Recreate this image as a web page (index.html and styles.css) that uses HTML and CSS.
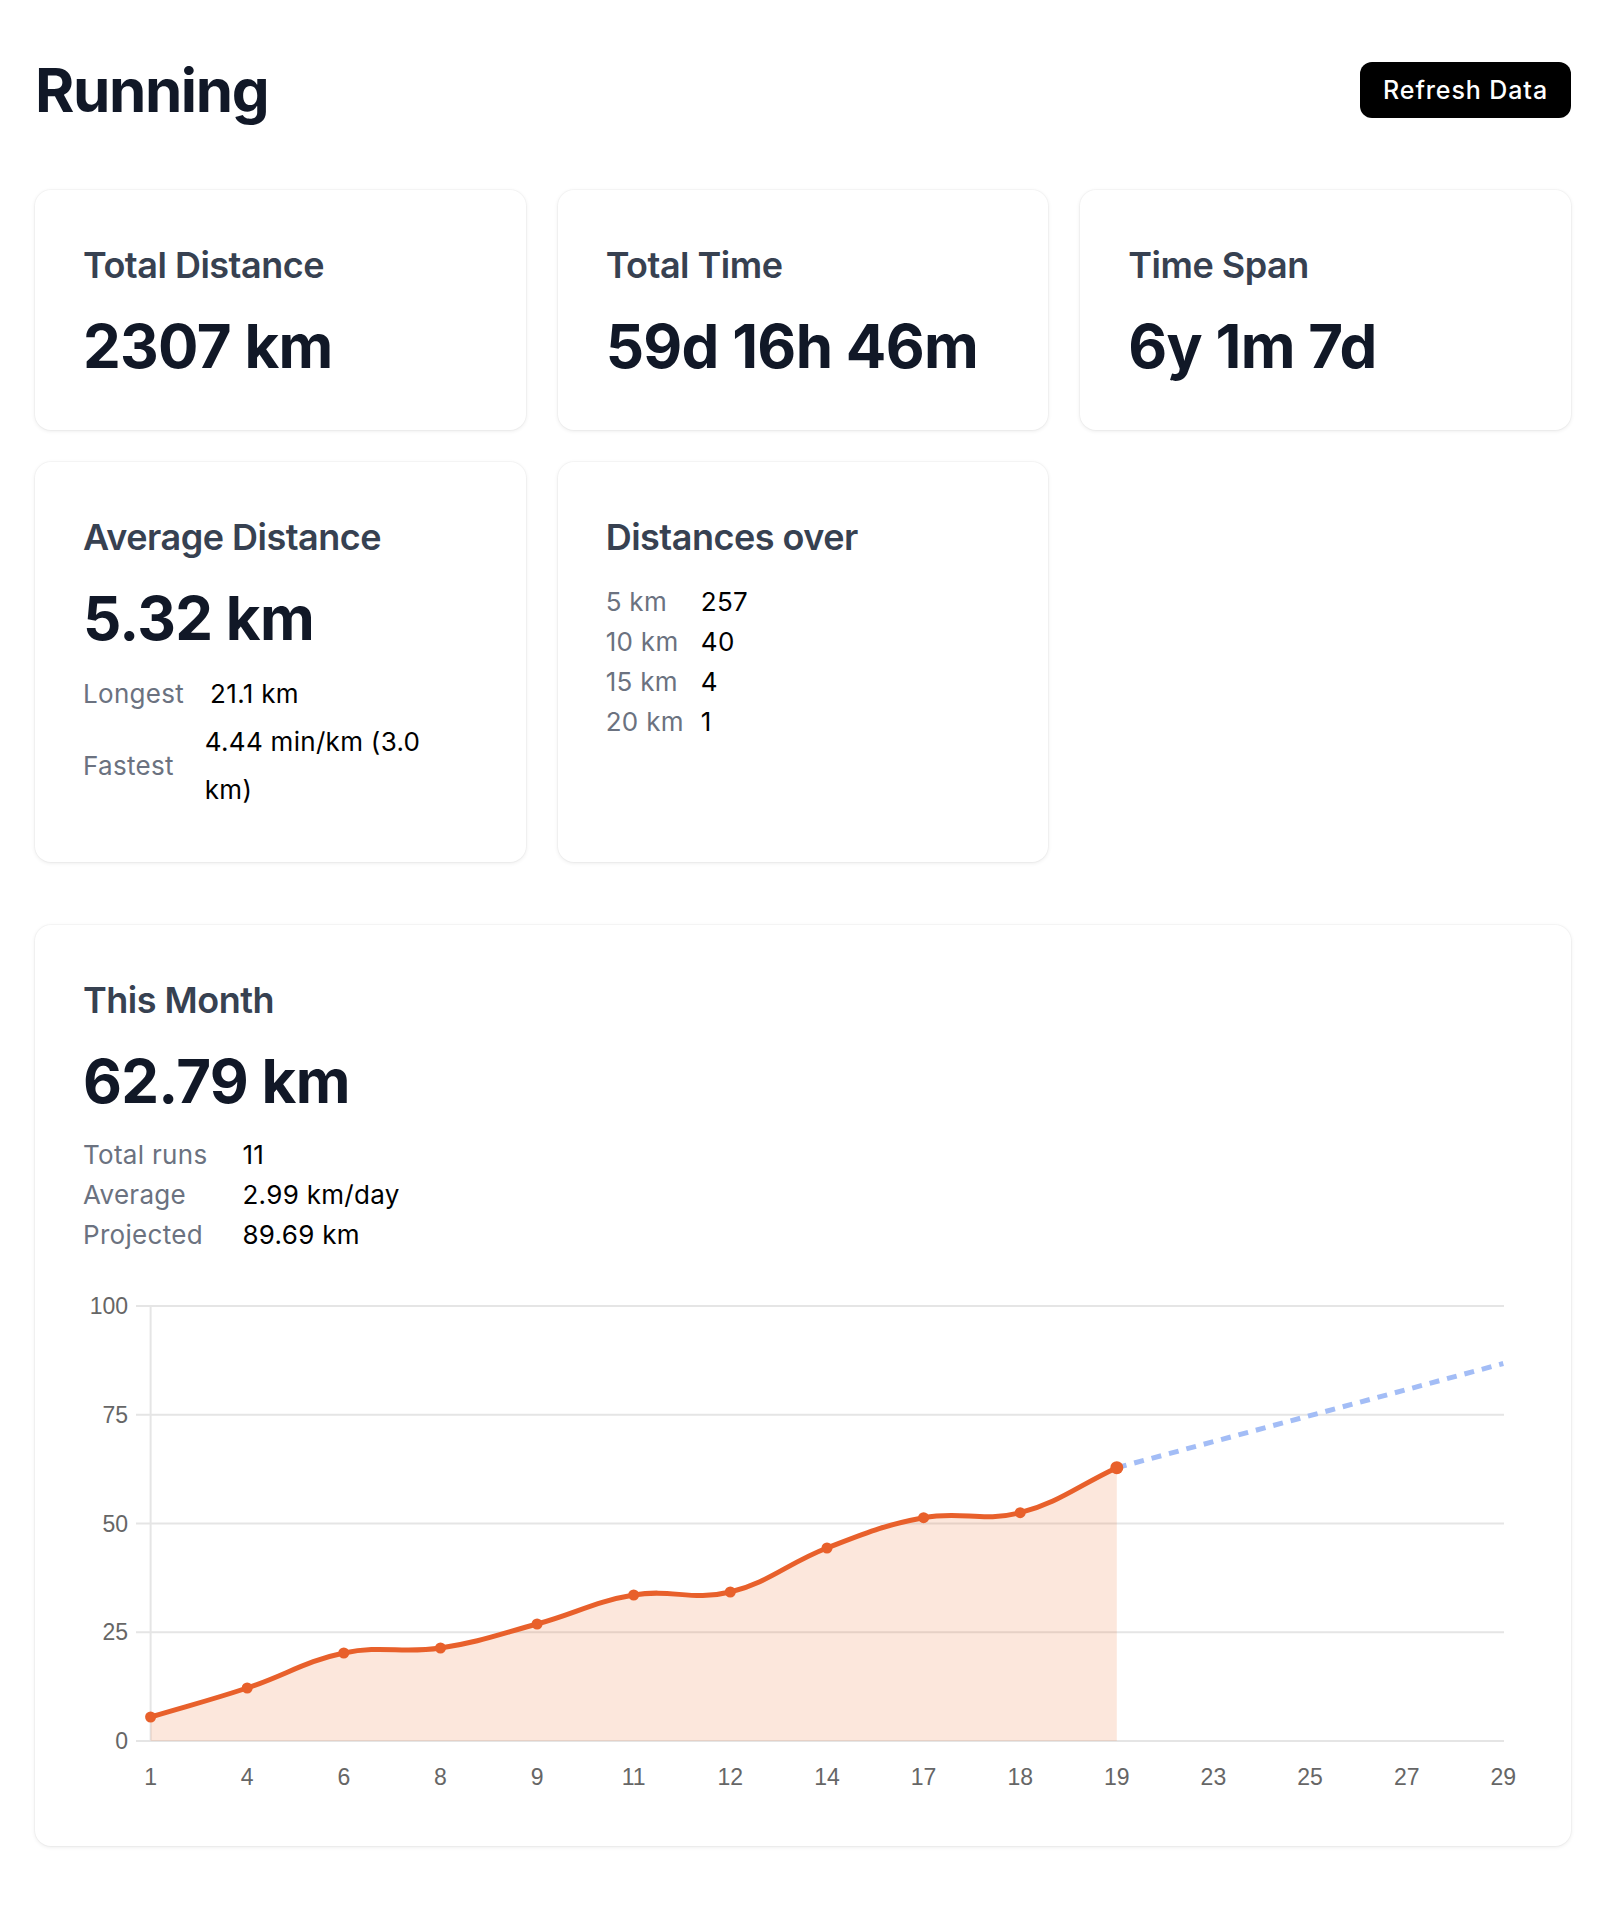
FILE: index.html
```html
<!DOCTYPE html>
<html lang="en">
<head>
<meta charset="utf-8">
<title>Running</title>
<link rel="stylesheet" href="styles.css">
</head>
<body>
<div class="page">
  <header class="header">
    <h1 class="title">Running</h1>
    <button class="refresh">Refresh Data</button>
  </header>

  <section class="grid">
    <div class="card">
      <h2 class="card-title">Total Distance</h2>
      <div class="card-value">2307 km</div>
    </div>
    <div class="card">
      <h2 class="card-title">Total Time</h2>
      <div class="card-value">59d 16h 46m</div>
    </div>
    <div class="card">
      <h2 class="card-title">Time Span</h2>
      <div class="card-value">6y 1m 7d</div>
    </div>
    <div class="card">
      <h2 class="card-title">Average Distance</h2>
      <div class="card-value">5.32 km</div>
      <div class="records">
        <div class="rec-row">
          <span class="label">Longest</span>
          <span class="val gap-a">21.1 km</span>
        </div>
        <div class="rec-row">
          <span class="label">Fastest</span>
          <span class="val gap-b wrap">4.44 min/km (3.0 km)</span>
        </div>
      </div>
    </div>
    <div class="card">
      <h2 class="card-title">Distances over</h2>
      <table class="dist-table">
        <tr><td class="label">5 km</td><td class="val">257</td></tr>
        <tr><td class="label">10 km</td><td class="val">40</td></tr>
        <tr><td class="label">15 km</td><td class="val">4</td></tr>
        <tr><td class="label">20 km</td><td class="val">1</td></tr>
      </table>
    </div>
  </section>

  <section class="card month">
    <h2 class="card-title">This Month</h2>
    <div class="card-value">62.79 km</div>
    <table class="month-table">
      <tr><td class="label">Total runs</td><td class="val">11</td></tr>
      <tr><td class="label">Average</td><td class="val">2.99 km/day</td></tr>
      <tr><td class="label">Projected</td><td class="val">89.69 km</td></tr>
    </table>
    <svg class="chart" width="1440" height="527" viewBox="0 0 1440 527">
      <g transform="translate(-83 -1271)">
        <g class="grid-lines">
          <line x1="136" y1="1306" x2="1504" y2="1306"/>
          <line x1="136" y1="1414.75" x2="1504" y2="1414.75"/>
          <line x1="136" y1="1523.5" x2="1504" y2="1523.5"/>
          <line x1="136" y1="1632.25" x2="1504" y2="1632.25"/>
          <line x1="136" y1="1741" x2="1504" y2="1741"/>
          <line x1="150.6" y1="1306" x2="150.6" y2="1741"/>
        </g>
        <g class="y-labels">
          <text x="128" y="1314">100</text>
          <text x="128" y="1423">75</text>
          <text x="128" y="1531.5">50</text>
          <text x="128" y="1640">25</text>
          <text x="128" y="1749">0</text>
        </g>
        <g class="x-labels">
          <text x="150.6" y="1785">1</text>
          <text x="247.2" y="1785">4</text>
          <text x="343.8" y="1785">6</text>
          <text x="440.5" y="1785">8</text>
          <text x="537.1" y="1785">9</text>
          <text x="633.7" y="1785">11</text>
          <text x="730.3" y="1785">12</text>
          <text x="827" y="1785">14</text>
          <text x="923.6" y="1785">17</text>
          <text x="1020.2" y="1785">18</text>
          <text x="1116.8" y="1785">19</text>
          <text x="1213.4" y="1785">23</text>
          <text x="1310" y="1785">25</text>
          <text x="1406.7" y="1785">27</text>
          <text x="1503.3" y="1785">29</text>
        </g>
        <path class="area" d="M150.6,1741 L150.6,1717 C189.2,1705.4 208.6,1700.8 247.2,1688 C285.8,1675.2 305.2,1661 343.8,1653 C382.4,1645 401.9,1653.8 440.5,1648 C479.1,1642.2 498.5,1634.6 537.1,1624 C575.7,1613.4 595.1,1601.4 633.7,1595 C672.3,1588.6 691.7,1601.4 730.3,1592 C768.9,1582.6 788.4,1562.9 827,1548 C865.6,1533.1 885,1524.8 923.6,1517.7 C962.2,1510.6 981.6,1522.7 1020.2,1512.7 C1058.8,1502.7 1078.2,1485.7 1116.8,1467.7 L1116.8,1741 Z"/>
        <path class="projection" d="M1116.8,1467.7 L1503.3,1363.5"/>
        <path class="line" d="M150.6,1717 C189.2,1705.4 208.6,1700.8 247.2,1688 C285.8,1675.2 305.2,1661 343.8,1653 C382.4,1645 401.9,1653.8 440.5,1648 C479.1,1642.2 498.5,1634.6 537.1,1624 C575.7,1613.4 595.1,1601.4 633.7,1595 C672.3,1588.6 691.7,1601.4 730.3,1592 C768.9,1582.6 788.4,1562.9 827,1548 C865.6,1533.1 885,1524.8 923.6,1517.7 C962.2,1510.6 981.6,1522.7 1020.2,1512.7 C1058.8,1502.7 1078.2,1485.7 1116.8,1467.7"/>
        <g class="dots">
          <circle cx="150.6" cy="1717" r="5.5"/>
          <circle cx="247.2" cy="1688" r="5.5"/>
          <circle cx="343.8" cy="1653" r="5.5"/>
          <circle cx="440.5" cy="1648" r="5.5"/>
          <circle cx="537.1" cy="1624" r="5.5"/>
          <circle cx="633.7" cy="1595" r="5.5"/>
          <circle cx="730.3" cy="1592" r="5.5"/>
          <circle cx="827" cy="1548" r="5.5"/>
          <circle cx="923.6" cy="1517.7" r="5.5"/>
          <circle cx="1020.2" cy="1512.7" r="5.5"/>
          <circle cx="1116.8" cy="1467.7" r="6.5"/>
        </g>
      </g>
    </svg>
  </section>
</div>
</body>
</html>
```

FILE: styles.css
```css
* { box-sizing: border-box; }

html, body {
  margin: 0;
  background: #ffffff;
}

body {
  font-family: Inter, "Noto Sans", "Liberation Sans", sans-serif;
  color: #111827;
}

.page {
  padding: 60px 43px 60px 35px;
}

.header {
  display: flex;
  align-items: center;
  justify-content: space-between;
  height: 60px;
  margin-bottom: 70px;
}

.title {
  margin: 0;
  font-size: 60px;
  line-height: 60px;
  font-weight: 700;
  letter-spacing: -1.4px;
  color: #111827;
}

.refresh {
  height: 56px;
  padding: 0 23px;
  border: none;
  border-radius: 12px;
  background: #000000;
  color: #ffffff;
  font-family: Inter, "Noto Sans", sans-serif;
  font-size: 25px;
  font-weight: 500;
  letter-spacing: 0.9px;
}

.grid {
  display: grid;
  grid-template-columns: repeat(3, 1fr);
  gap: 32px;
  margin-bottom: 63px;
}

.card {
  background: #ffffff;
  border-radius: 16px;
  padding: 48px;
  box-shadow: 0 1px 4px rgba(0, 0, 0, 0.09), 0 0 0 1px rgba(0, 0, 0, 0.025);
}

.card-title {
  margin: 0;
  font-size: 36px;
  line-height: 54px;
  font-weight: 600;
  letter-spacing: -0.5px;
  color: #374151;
}

.card-value {
  margin-top: 18px;
  font-size: 60px;
  line-height: 72px;
  font-weight: 700;
  letter-spacing: -0.7px;
  color: #111827;
}

.label {
  color: #6b7280;
}

.val {
  color: #000000;
}

.records {
  margin-top: 16px;
  font-size: 26px;
  line-height: 48px;
  letter-spacing: 0.3px;
}

.rec-row {
  display: flex;
  align-items: center;
}

.gap-a { margin-left: 26px; }
.gap-b { margin-left: 31px; }

.wrap {
  max-width: 250px;
}

.dist-table,
.month-table {
  border-collapse: collapse;
  font-size: 26px;
  line-height: 40px;
  letter-spacing: 0.3px;
  margin-top: 18px;
}

.dist-table td,
.month-table td {
  padding: 0;
  vertical-align: middle;
}

.dist-table td.label { padding-right: 17px; }
.month-table td.label { padding-right: 35px; }

.month-table {
  margin-bottom: 16px;
}

.chart {
  display: block;
  overflow: visible;
}

.grid-lines line {
  stroke: #e5e5e5;
  stroke-width: 2;
}

.y-labels text,
.x-labels text {
  font-family: "Liberation Sans", Arial, sans-serif;
  font-size: 23px;
  fill: #666666;
}

.y-labels text { text-anchor: end; }
.x-labels text { text-anchor: middle; }

.area {
  fill: rgba(236, 104, 40, 0.16);
}

.line {
  fill: none;
  stroke: #e8602b;
  stroke-width: 5;
}

.projection {
  fill: none;
  stroke: #a3bdf6;
  stroke-width: 5;
  stroke-dasharray: 10 8;
}

.dots circle {
  fill: #e8602b;
}
```
